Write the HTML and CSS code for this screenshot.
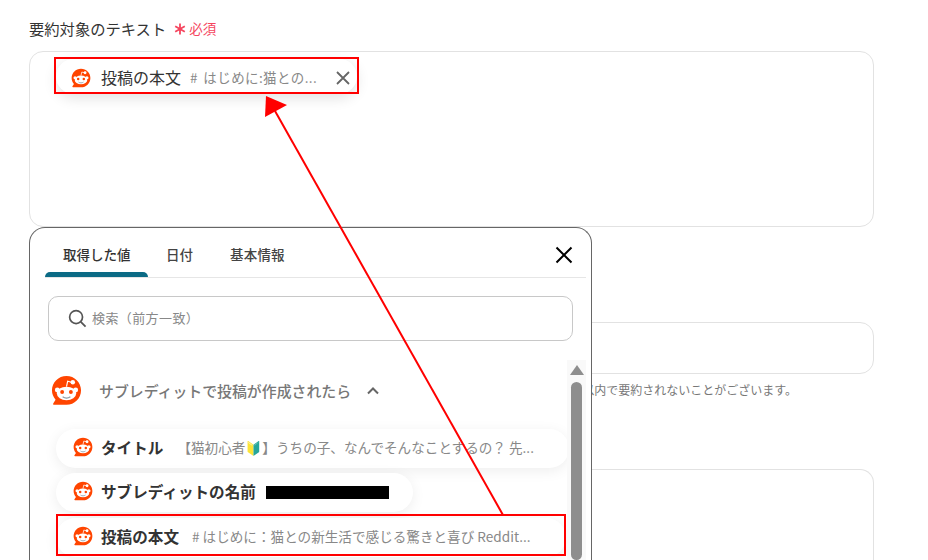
FILE: index.html
```html
<!DOCTYPE html>
<html lang="ja">
<head>
    <meta charset="utf-8">
    <link rel="stylesheet" href="styles.css">
</head>
<body>
    <svg class="defs" width="0" height="0">
        <symbol id="reddit" viewBox="0 0 32 32">
            <path d="M16 1C7.700 1 1 7.600 1 15.800c0 3.700 1.400 7.100 3.700 9.700L2.300 29.300c-.4.700.1 1.500.9 1.500H16c8.300 0 15-6.700 15-15S24.300 1 16 1z" fill="#ff4500"/>
            <ellipse cx="16" cy="19" rx="10" ry="7" fill="#fff"/>
            <circle cx="6.500" cy="15.500" r="2.500" fill="#fff"/>
            <circle cx="25.500" cy="15.500" r="2.500" fill="#fff"/>
            <circle cx="11.500" cy="17.500" r="2" fill="#ff4500"/>
            <circle cx="20.500" cy="17.500" r="2" fill="#ff4500"/>
            <path d="M12 22.500c2.500 1.700 5.500 1.700 8 0" fill="none" stroke="#8a9aa5" stroke-width="1.300"/>
            <path d="M16 12l1.200-5.500 4 1" fill="none" stroke="#fff" stroke-width="1.200"/>
            <circle cx="22.500" cy="7.500" r="2.300" fill="#fff"/>
        </symbol>
    </svg>

    <main class="form">
        <div class="field-label">
            <span>要約対象のテキスト</span>
            <span class="required">
                <svg class="asterisk" viewBox="0 0 12 12"><path d="M6 .5v11M1.200 3.200l9.600 5.600M10.800 3.200L1.200 8.800"/></svg>
                必須
            </span>
        </div>
        <div class="box box-large"></div>
        <div class="box box-small"></div>
        <p class="hint">文字数によっては指定の文字数以内で要約されないことがございます。</p>
        <div class="box box-last"></div>
    </main>

    <div class="chip">
        <svg class="icon-small chip-icon"><use href="#reddit"/></svg>
        <span class="chip-title">投稿の本文</span>
        <span class="chip-value"># はじめに:猫との...</span>
        <svg class="chip-close" viewBox="0 0 14 14"><path d="M1 1l12 12M13 1L1 13"/></svg>
    </div>

    <section class="panel">
        <div class="tabs">
            <div class="tab active">取得した値</div>
            <div class="tab">日付</div>
            <div class="tab tab-last">基本情報</div>
            <svg class="panel-close" viewBox="0 0 18 18"><path d="M1.500 1.500l15 15M16.500 1.500l-15 15"/></svg>
        </div>
        <div class="search">
            <svg class="search-icon" viewBox="0 0 20 20"><circle cx="8.500" cy="8.500" r="6.800"/><path d="M13.500 13.500l5 5"/></svg>
            <span class="search-text">検索（前方一致）</span>
        </div>
        <div class="results">
            <div class="group-head">
                <svg class="icon-large"><use href="#reddit"/></svg>
                <span class="group-title">サブレディットで投稿が作成されたら</span>
                <svg class="chevron" viewBox="0 0 12 8"><path d="M1 6.500l5-5 5 5"/></svg>
            </div>
            <div class="row row-wide">
                <svg class="icon-small"><use href="#reddit"/></svg>
                <span class="row-title">タイトル</span>
                <span class="row-value title-value">【猫初心者🔰】うちの子、なんでそんなことするの？ 先...</span>
            </div>
            <div class="row row-name">
                <svg class="icon-small"><use href="#reddit"/></svg>
                <span class="row-title">サブレディットの名前</span>
                <span class="redacted"></span>
            </div>
            <div class="row row-body">
                <svg class="icon-small"><use href="#reddit"/></svg>
                <span class="row-title">投稿の本文</span>
                <span class="row-value"># はじめに：猫との新生活で感じる驚きと喜び Reddit...</span>
            </div>
        </div>
        <div class="scrollbar">
            <div class="scroll-up"></div>
            <div class="scroll-thumb"></div>
        </div>
    </section>

    <!-- 赤い注釈 -->
    <div class="mark mark-chip"></div>
    <div class="mark mark-row"></div>
    <svg class="arrow" width="928" height="560">
        <path d="M503 515L275 111" stroke="#f00" stroke-width="2" fill="none"/>
        <path d="M266 96L287 105L265 117z" fill="#f00"/>
    </svg>
</body>
</html>
```

FILE: styles.css
```css
* {
    box-sizing: border-box;
}

html, body {
    height: 100%;
}

body {
    margin: 0;
    background: #fff;
    color: #333;
    font-family: "Noto Sans CJK JP", "Noto Sans", sans-serif;
    overflow: hidden;
    position: relative;
}

.defs {
    position: absolute;
}

.form {
    width: 845px;
    margin-left: 29px;
    padding-top: 17px;
}

.field-label {
    display: flex;
    align-items: center;
    gap: 8px;
    height: 22px;
    font-size: 15.300px;
    line-height: 22px;
}

.required {
    display: flex;
    align-items: center;
    gap: 3px;
    color: #f5465f;
    font-size: 13.500px;
}

.asterisk {
    width: 12px;
    height: 12px;
    margin-top: 2px;
    stroke: #f5465f;
    stroke-width: 1.800;
    fill: none;
}

.box {
    border: 1px solid #e2e2e2;
    border-radius: 14px;
}

.box-large {
    height: 176px;
    margin-top: 12px;
}

.box-small {
    height: 52px;
    margin-top: 95px;
}

.hint {
    margin: 8px 0 0;
    color: #777;
    font-size: 12px;
    line-height: 16px;
    text-align: right;
    padding-right: 77px;
    white-space: nowrap;
}

.box-last {
    height: 91px;
    margin-top: 71px;
    border-bottom: none;
    border-radius: 14px 14px 0 0;
}

.chip {
    position: absolute;
    left: 56px;
    top: 59px;
    width: 301px;
    height: 35px;
    padding-left: 15px;
    display: flex;
    align-items: center;
    background: #fff;
    border-radius: 18px;
    box-shadow: 0 4px 14px rgba(0, 0, 0, 0.12);
}

.icon-small {
    width: 20px;
    height: 20px;
    flex: none;
}

.chip-icon {
    margin-top: 2px;
}

.icon-large {
    width: 31px;
    height: 31px;
    flex: none;
}

.chip-title {
    margin-left: 10px;
    font-size: 16px;
    color: #333;
    white-space: nowrap;
}

.chip-value {
    margin-left: 9px;
    font-size: 13.500px;
    letter-spacing: 0.400px;
    word-spacing: 2px;
    color: #888;
    white-space: nowrap;
}

.chip-close {
    position: absolute;
    left: 280px;
    top: 12px;
    width: 14px;
    height: 14px;
    stroke: #666;
    stroke-width: 1.800;
    fill: none;
}

.panel {
    position: absolute;
    left: 29px;
    top: 227px;
    width: 563px;
    height: 333px;
    background: #fff;
    border: 1px solid #666;
    border-bottom: none;
    border-radius: 16px 16px 0 0;
    overflow: hidden;
}

.tabs {
    position: relative;
    display: flex;
    height: 50px;
    margin: 0 5px 0 15px;
    border-bottom: 1px solid #e6e6e6;
}

.tab {
    padding: 14px 18px 0;
    font-size: 13.500px;
    line-height: 24px;
    font-weight: 500;
    color: #444;
}

.tab-last {
    padding-left: 19px;
    letter-spacing: 0.200px;
}

.tab.active {
    position: relative;
    width: 103px;
    padding-right: 0;
    color: #333;
}

.tab.active::after {
    content: '';
    position: absolute;
    left: 0;
    right: 0;
    bottom: 0;
    height: 5px;
    background: #0b6a85;
    border-radius: 5px 5px 0 0;
}

.panel-close {
    position: absolute;
    right: 13px;
    top: 18px;
    width: 18px;
    height: 18px;
    stroke: #000;
    stroke-width: 2;
    fill: none;
}

.search {
    display: flex;
    align-items: center;
    gap: 5px;
    height: 45px;
    margin: 18px 18px 0;
    padding-left: 19px;
    border: 1px solid #c8c8c8;
    border-radius: 10px;
    font-size: 13px;
    letter-spacing: 0.400px;
    color: #888;
}

.search-text {
    margin-bottom: 2px;
}

.search-icon {
    width: 19px;
    height: 19px;
    stroke: #555;
    stroke-width: 1.800;
    fill: none;
}

.results {
    margin-top: 35px;
    padding-left: 21px;
}

.group-head {
    display: flex;
    align-items: center;
    height: 34px;
    padding-bottom: 5px;
}

.group-title {
    margin-left: 17px;
    font-size: 14.900px;
    font-weight: 500;
    color: #777;
}

.chevron {
    width: 12px;
    height: 8px;
    margin-left: 16px;
    stroke: #666;
    stroke-width: 2;
    fill: none;
}

.row {
    display: flex;
    align-items: center;
    height: 39px;
    margin-top: 5px;
    padding: 0 0 4px 17px;
    margin-left: 5px;
    background: #fff;
    border-radius: 20px;
    box-shadow: 0 3px 14px rgba(0, 0, 0, 0.07);
}

.row-wide {
    width: 513px;
    margin-top: 19px;
}

.row-name {
    width: 357px;
}

.row-body {
    width: 510px;
    margin-top: 6px;
}

.row-title {
    margin-left: 8px;
    font-size: 15.600px;
    font-weight: 700;
    color: #333;
    white-space: nowrap;
}

.row-value {
    margin-left: 13px;
    font-size: 13.600px;
    color: #888;
    white-space: nowrap;
}

.title-value {
    margin-left: 14px;
}

.redacted {
    width: 123px;
    height: 13px;
    margin: 3px 0 0 10px;
    background: #000;
}

.scrollbar {
    position: absolute;
    left: 537px;
    top: 132px;
    width: 19px;
    height: 200px;
    background: #f9f9f9;
}

.scroll-up {
    width: 0;
    height: 0;
    margin: 0 auto;
    position: relative;
    top: 5px;
    border-left: 7px solid transparent;
    border-right: 7px solid transparent;
    border-bottom: 10px solid #8e8e8e;
}

.scroll-thumb {
    width: 11px;
    height: 178px;
    margin: 12px auto 0;
    background: #8e8e8e;
    border-radius: 6px;
}

.mark {
    position: absolute;
    border: 2px solid #f00;
}

.mark-chip {
    left: 54px;
    top: 57px;
    width: 305px;
    height: 37px;
}

.mark-row {
    left: 56px;
    top: 514px;
    width: 510px;
    height: 42px;
}

.arrow {
    position: absolute;
    left: 0;
    top: 0;
}
```
